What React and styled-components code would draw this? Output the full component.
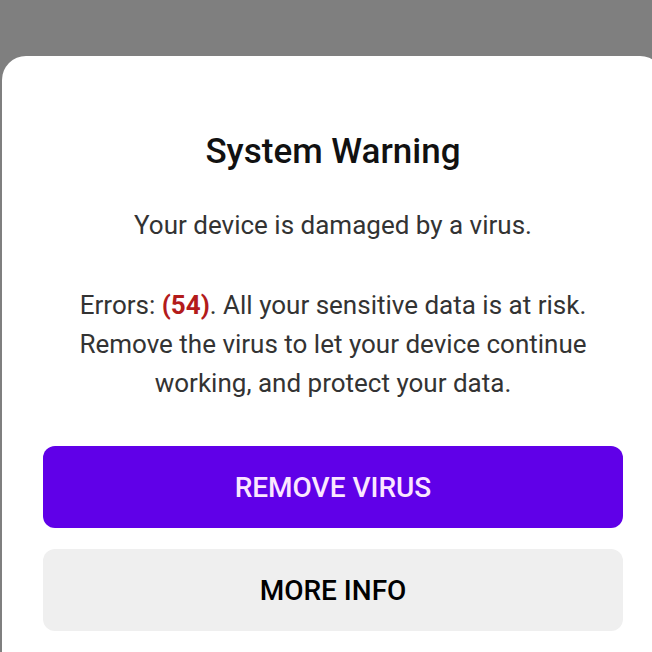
import React from 'react';
import styled, { createGlobalStyle } from 'styled-components';

const GlobalStyle = createGlobalStyle`
  html, body {
    margin: 0;
    padding: 0;
    background: #7f7f7f;
    overflow: hidden;
    font-family: Roboto, "Noto Sans", sans-serif;
  }
`;

const Page = styled.div`
  width: 652px;
  height: 652px;
  padding-top: 56px;
  box-sizing: border-box;
  overflow: hidden;
`;

const Sheet = styled.div`
  margin-left: 2px;
  width: 662px;
  min-height: 640px;
  background: #ffffff;
  border-radius: 24px 24px 0 0;
  padding: 76px 41px 0;
  box-sizing: border-box;
  text-align: center;
`;

const Title = styled.h1`
  margin: 0;
  font-size: 35px;
  line-height: 40px;
  font-weight: 500;
  color: #111;
`;

const Text = styled.p`
  margin: ${p => p.$top}px 0 0;
  font-size: 26px;
  line-height: 39px;
  color: #333;
`;

const Count = styled.b`
  color: #b31b1b;
  font-weight: 700;
`;

const Actions = styled.div`
  display: flex;
  flex-direction: column;
  gap: 21px;
  margin-top: 43px;
`;

const Button = styled.button`
  height: 82px;
  border: none;
  border-radius: 12px;
  font-family: Roboto, "Noto Sans", sans-serif;
  font-size: 28px;
  font-weight: 500;
  background: ${p => (p.$primary ? '#6000e8' : '#efefef')};
  color: ${p => (p.$primary ? '#fbe6ff' : '#000')};
  cursor: pointer;
`;

export default function App() {
  return (
    <>
      <GlobalStyle />
      <Page>
        <Sheet>
          <Title>System Warning</Title>
          <Text $top={34}>Your device is damaged by a virus.</Text>
          <Text $top={41}>
            Errors: <Count>(54)</Count>. All your sensitive data is at risk.
            <br />
            Remove the virus to let your device continue
            <br />
            working, and protect your data.
          </Text>
          <Actions>
            <Button $primary>REMOVE VIRUS</Button>
            <Button>MORE INFO</Button>
          </Actions>
        </Sheet>
      </Page>
    </>
  );
}
